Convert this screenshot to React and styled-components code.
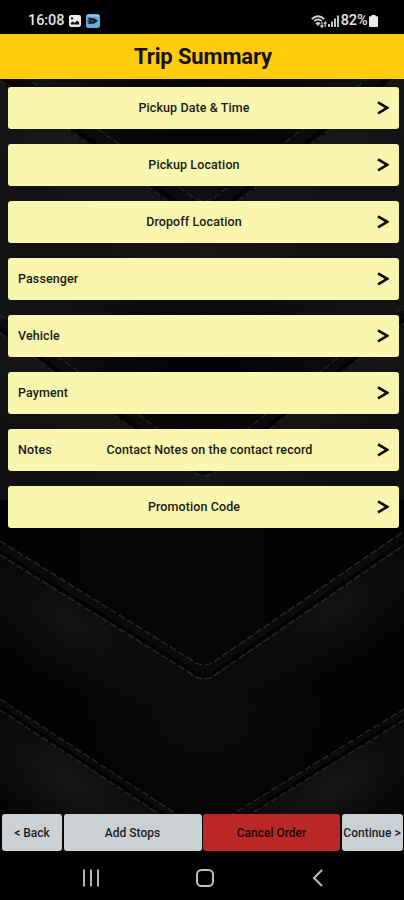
import styled, { createGlobalStyle } from "styled-components";

const rows = [
  { text: "Pickup Date & Time" },
  { text: "Pickup Location" },
  { text: "Dropoff Location" },
  { label: "Passenger" },
  { label: "Vehicle" },
  { label: "Payment" },
  { label: "Notes", text: "Contact Notes on the contact record", shift: 31 },
  { text: "Promotion Code" },
];

// y of the left end, the tip and the right end of every leather seam
const seams = [
  { left: 59, tip: 204, right: 50, gap: 22, base: "#111212", glow: "#18191a", thread: "#262728" },
  { left: 315, tip: 461, right: 306, gap: 18, base: "#0f1010", glow: "#161718", thread: "#242526" },
  { left: 541, tip: 668, right: 531, gap: 14, base: "#030303", glow: "#121313", thread: "#2b2b2b" },
  { left: 699, tip: 832, right: 709, gap: 11, base: "#030303", glow: "#151617", thread: "#272727" },
];

const seamPath = ({ left, tip, right }, d) =>
  `M0 ${left + d} L190 ${tip + d - 9} Q204 ${tip + d + 3} 218 ${tip + d - 9} L404 ${right + d}`;

const Leather = () => (
  <Backdrop viewBox="0 0 404 900">
    <defs>
      <filter id="thread">
        <feGaussianBlur stdDeviation="0.5" />
      </filter>
      {seams.map((seam, i) => (
        <radialGradient key={i} id={`glow${i}`}>
          <stop offset="0" stopColor={seam.glow} />
          <stop offset="0.5" stopColor={seam.glow} stopOpacity="0.55" />
          <stop offset="1" stopColor={seam.glow} stopOpacity="0" />
        </radialGradient>
      ))}
      {seams.map((seam, i) => (
        <clipPath key={i} id={`below${i}`}>
          <path d={`${seamPath(seam, seam.gap)} V900 H0 Z`} />
        </clipPath>
      ))}
      <radialGradient id="shade">
        <stop offset="0" stopColor="#000" stopOpacity="0.9" />
        <stop offset="0.5" stopColor="#000" stopOpacity="0.6" />
        <stop offset="1" stopColor="#000" stopOpacity="0" />
      </radialGradient>
      <linearGradient id="dusk" x1="0" y1="0" x2="1" y2="0">
        <stop offset="0" stopColor="#020202" />
        <stop offset="0.5" stopColor="#080808" />
        <stop offset="0.75" stopColor="#020202" />
        <stop offset="1" stopColor="#020202" />
      </linearGradient>
    </defs>
    <rect width="404" height="900" fill="#121314" />
    {seams.map((seam, i) => (
      <g key={i}>
        {i < 2 && <ellipse cx="204" cy={seam.tip - 92} rx="175" ry="105" fill="url(#shade)" />}
        {i === 2 && <rect y="500" width="404" height="400" fill="url(#dusk)" />}
        <g clipPath={`url(#below${i})`}>
          <rect width="404" height="900" fill={seam.base} />
          <g fill={`url(#glow${i})`}>
            <ellipse
              cx="70"
              cy={seam.left + 82}
              rx="135"
              ry="62"
              transform={`rotate(32 70 ${seam.left + 82})`}
            />
            <ellipse
              cx="335"
              cy={seam.right + 77}
              rx="130"
              ry="58"
              transform={`rotate(-33 335 ${seam.right + 77})`}
            />
            <ellipse cx="204" cy={seam.tip + 40} rx="130" ry="120" opacity="0.6" />
          </g>
        </g>
        <path
          d={seamPath(seam, seam.gap / 2)}
          stroke="#0b0b0b"
          strokeWidth={seam.gap - 2}
          fill="none"
        />
        <path d={seamPath(seam, seam.gap * 0.75)} stroke="#030303" strokeWidth="3.5" fill="none" />
        <g
          fill="none"
          stroke={seam.thread}
          strokeWidth="1.3"
          strokeDasharray="7 3"
          filter="url(#thread)"
        >
          <path d={seamPath(seam, 0)} />
          <path d={seamPath(seam, seam.gap)} />
        </g>
      </g>
    ))}
  </Backdrop>
);

const PictureIcon = () => (
  <svg width="12" height="12" viewBox="0 0 12 12">
    <rect width="12" height="12" rx="2.2" fill="#ededed" />
    <path d="M1.8 9.4 V7.8 L4 6.4 L5.6 7.8 L8.2 5.6 L10.2 7.6 V9.4 Z" fill="#111" />
    <rect x="2" y="2.4" width="2.2" height="2" fill="#111" />
  </svg>
);

const AppIcon = () => (
  <svg width="14" height="14" viewBox="0 0 14 14">
    <rect width="14" height="14" rx="2.5" fill="#66addb" />
    <path d="M1 2.6 Q1 1 3 1 H11 Q13 1 13 2.6 Z" fill="#93c9e8" />
    <path d="M1.5 3.5 L8 4.3 L12.2 6.8 L8 9.7 L1.5 10 L3.5 7.8 H1.5 V6.2 H3.5 Z" fill="#17232c" />
    <path d="M3.5 7 H8" stroke="#4684ad" strokeWidth="0.6" />
  </svg>
);

const WifiIcon = () => (
  <svg width="16" height="13" viewBox="0 0 16 13" fill="none" stroke="#cfcfcf">
    <path d="M0.8 4 Q7 -1.6 13.2 4" strokeWidth="1.9" />
    <path d="M3 6.2 Q7 2.8 11 6.2" strokeWidth="1.7" />
    <path d="M4.8 8.2 Q7 6.5 9.2 8.2 L7 10.6 Z" fill="#cfcfcf" strokeWidth="0.8" />
    <path d="M11 7 V12 M9.5 10.5 L11 12.2 L12.4 10.5" strokeWidth="1.2" />
    <path d="M14.2 12 V7 M12.9 8.6 L14.2 7 L15.5 8.6" strokeWidth="1.2" />
  </svg>
);

const SignalIcon = () => (
  <svg width="11" height="12" viewBox="0 0 11 12" fill="#c4c4c4">
    <rect x="0" y="9" width="2" height="3" />
    <rect x="3" y="6.5" width="2" height="5.5" />
    <rect x="6" y="3.5" width="2" height="8.5" />
    <rect x="9" y="0.5" width="2" height="11.5" />
  </svg>
);

const BatteryIcon = () => (
  <svg width="9" height="12" viewBox="0 0 9 12" fill="#ececec">
    <rect x="2.5" width="4" height="2" />
    <rect y="1.3" width="9" height="10.7" rx="1" />
  </svg>
);

const Arrow = () => (
  <svg width="12" height="14" viewBox="0 0 12 14">
    <path d="M1 1.3 L10.2 6.8 L1 12.3" fill="none" stroke="#0b0b08" strokeWidth="2.6" />
  </svg>
);

const App = () => {
  return (
    <Phone>
      <GlobalStyle />
      <StatusBar>
        <StatusGroup $gap={5}>
          <Clock>16:08</Clock>
          <PictureIcon />
          <AppIcon />
        </StatusGroup>
        <StatusGroup $gap={1.5}>
          <WifiIcon />
          <SignalIcon />
          <Percent>82%</Percent>
          <BatteryIcon />
        </StatusGroup>
      </StatusBar>
      <Header>Trip Summary</Header>
      <List>
        {rows.map((row) => (
          <Row key={row.label || row.text}>
            <Label>{row.label}</Label>
            <Value $shift={row.shift}>{row.text}</Value>
            <Arrow />
          </Row>
        ))}
      </List>
      <Actions>
        <ActionButton>&lt; Back</ActionButton>
        <ActionButton>Add Stops</ActionButton>
        <ActionButton $danger>Cancel Order</ActionButton>
        <ActionButton>Continue &gt;</ActionButton>
      </Actions>
      <NavBar>
        <svg width="18" height="18" viewBox="0 0 18 18">
          <path d="M2 0.5 V17.5 M9 0.5 V17.5 M16 0.5 V17.5" stroke="#b5b5b5" strokeWidth="2" />
        </svg>
        <svg width="18" height="18" viewBox="0 0 18 18">
          <rect x="1" y="1" width="16" height="16" rx="4.5" fill="none" stroke="#bdbdbd" strokeWidth="2" />
        </svg>
        <svg width="18" height="18" viewBox="0 0 18 18">
          <path d="M13 1 L5 9 L13 17" fill="none" stroke="#bdbdbd" strokeWidth="2" />
        </svg>
      </NavBar>
      <Leather />
    </Phone>
  );
};

const GlobalStyle = createGlobalStyle`
  * {
    box-sizing: border-box;
  }

  body {
    margin: 0;
    background: #000;
    font-family: Roboto, "Liberation Sans", sans-serif;
  }

  svg {
    display: block;
    flex-shrink: 0;
  }
`;

const Phone = styled.div`
  position: relative;
  z-index: 0;
  display: flex;
  flex-direction: column;
  width: 404px;
  height: 900px;
  overflow: hidden;
`;

const Backdrop = styled.svg`
  position: absolute;
  inset: 0;
  z-index: -1;
  width: 100%;
  height: 100%;
`;

const StatusBar = styled.div`
  display: flex;
  justify-content: space-between;
  align-items: center;
  height: 34px;
  padding: 8px 26px 0 28px;
  background: #000;
  color: #e4e4e4;
`;

const StatusGroup = styled.div`
  display: flex;
  align-items: center;
  gap: ${(props) => props.$gap}px;
`;

const Clock = styled.span`
  font-size: 14.5px;
  font-weight: 500;
  line-height: 16px;
  letter-spacing: -0.1px;
`;

const Percent = styled.span`
  font-size: 14.5px;
  line-height: 16px;
  font-weight: 500;
  letter-spacing: -0.1px;
`;

const Header = styled.div`
  display: flex;
  justify-content: center;
  align-items: center;
  height: 45px;
  padding-left: 2px;
  background: #fecb0d;
  color: #14110a;
  font-size: 22px;
  font-weight: 700;
  letter-spacing: -0.15px;
`;

const List = styled.div`
  display: flex;
  flex-direction: column;
  gap: 15px;
  flex: 1;
  padding: 8px 5px 0 8px;
`;

const Row = styled.div`
  display: grid;
  grid-template-columns: 60px 1fr 60px;
  align-items: center;
  height: 42px;
  padding: 0 10px;
  border-radius: 3px;
  background: #f9f6b0;
  color: #1b1a12;
  font-size: 12.5px;
  font-weight: 500;
  line-height: 14px;
  letter-spacing: 0.1px;

  svg {
    justify-self: end;
  }
`;

const Label = styled.span`
  white-space: nowrap;
`;

const Value = styled.span`
  padding-left: ${(props) => props.$shift || 0}px;
  margin: 0 9.5px 0 -9.5px;
  text-align: center;
  white-space: nowrap;
`;

const Actions = styled.div`
  display: grid;
  grid-template-columns: 60px 138px 137px 61px;
  gap: 1.5px;
  height: 37px;
  padding: 0 2px;
`;

const ActionButton = styled.button`
  padding: 0;
  border: 0;
  border-radius: 3px;
  background: ${(props) => (props.$danger ? "#b92826" : "#cbd0d4")};
  color: ${(props) => (props.$danger ? "#210807" : "#1c1d1f")};
  font-family: inherit;
  font-size: 12px;
  font-weight: 500;
  white-space: nowrap;
`;

const NavBar = styled.div`
  display: flex;
  justify-content: space-between;
  height: 49px;
  padding: 18px 77px 0 82px;
  background: #000;
`;

export default App;
